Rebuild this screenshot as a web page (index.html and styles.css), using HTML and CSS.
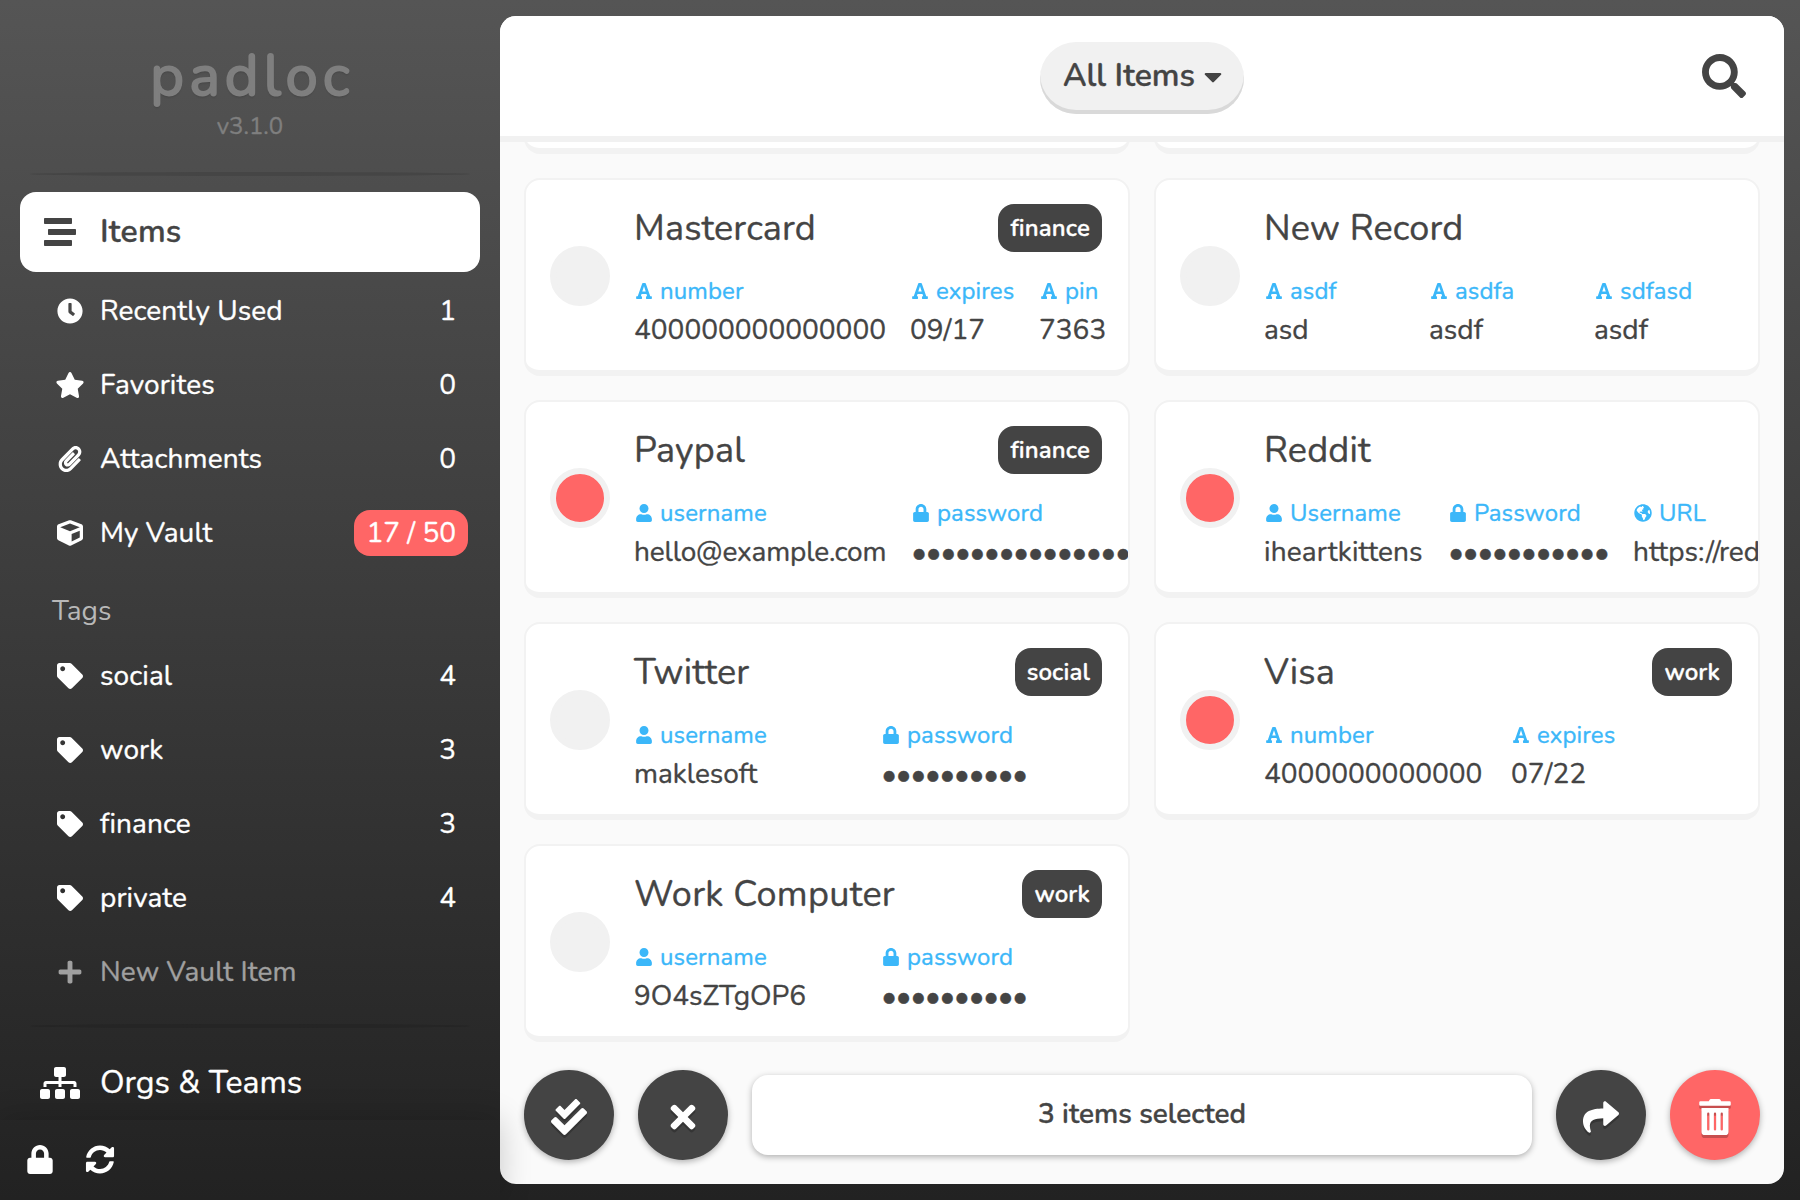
FILE: index.html
```html
<!DOCTYPE html>
<html lang="en">
<head>
<meta charset="utf-8">
<title>Padloc</title>
<link rel="stylesheet" href="styles.css">
</head>
<body>
<svg class="sprite" aria-hidden="true">
  <symbol id="stream" viewBox="0 0 512 512"><path d="M16 128h416c8.84 0 16-7.16 16-16V48c0-8.84-7.16-16-16-16H16C7.16 32 0 39.16 0 48v64c0 8.84 7.16 16 16 16zm480 80H80c-8.84 0-16 7.16-16 16v64c0 8.84 7.16 16 16 16h416c8.84 0 16-7.16 16-16v-64c0-8.84-7.16-16-16-16zm-64 176H16c-8.84 0-16 7.16-16 16v64c0 8.84 7.16 16 16 16h416c8.84 0 16-7.16 16-16v-64c0-8.84-7.16-16-16-16z"/></symbol>
  <symbol id="clock" viewBox="0 0 512 512"><path d="M256,8C119,8,8,119,8,256S119,504,256,504,504,393,504,256,393,8,256,8Zm92.49,313h0l-20,25a16,16,0,0,1-22.49,2.5h0l-67-49.72a40,40,0,0,1-15-31.23V112a16,16,0,0,1,16-16h32a16,16,0,0,1,16,16V256l58,42.5A16,16,0,0,1,348.49,321Z"/></symbol>
  <symbol id="star" viewBox="0 0 576 512"><path d="M259.3 17.8L194 150.2 47.9 171.5c-26.2 3.8-36.7 36.1-17.7 54.6l105.7 103-25 145.5c-4.5 26.3 23.2 46 46.4 33.7L288 439.6l130.7 68.7c23.2 12.2 50.9-7.4 46.4-33.7l-25-145.5 105.7-103c19-18.5 8.5-50.8-17.7-54.6L382 150.2 316.7 17.8c-11.7-23.6-45.6-23.9-57.4 0z"/></symbol>
  <symbol id="paperclip" viewBox="0 0 448 512"><path d="M43.246 466.142c-58.43-60.289-57.341-157.511 1.386-217.581L254.392 34c44.316-45.332 116.351-45.336 160.671 0 43.89 44.894 43.943 117.329 0 162.276L232.214 383.128c-29.855 30.537-78.633 30.111-107.982-.998-28.275-29.97-27.368-77.473 1.452-106.953l143.743-146.835c6.182-6.314 16.312-6.422 22.626-.241l22.861 22.379c6.315 6.182 6.422 16.312.241 22.626L171.427 319.927c-4.932 5.045-5.236 13.428-.648 18.292 4.372 4.634 11.245 4.711 15.688.165l182.849-186.851c19.613-20.062 19.613-52.725-.011-72.798-19.189-19.627-49.957-19.637-69.154 0L90.39 293.295c-34.763 35.56-35.299 93.12-1.191 128.313 34.01 35.093 88.985 35.137 123.058.286l172.06-175.999c6.177-6.319 16.307-6.433 22.626-.256l22.877 22.364c6.319 6.177 6.434 16.307.256 22.626l-172.06 175.998c-59.576 60.938-155.943 60.216-214.77-.485z"/></symbol>
  <symbol id="cube" viewBox="0 0 512 512"><path d="M239.1 6.3l-208 78c-18.7 7-31.1 25-31.1 45v225.1c0 18.2 10.3 34.8 26.5 42.9l208 104c13.5 6.8 29.4 6.8 42.9 0l208-104c16.3-8.1 26.5-24.8 26.5-42.9V129.3c0-20-12.4-37.9-31.1-44.9l-208-78C262 2.2 250 2.2 239.1 6.3zM256 68.4l192 72v1.1l-192 78-192-78v-1.1l192-72zm32 356V275.5l160-65v133.9l-160 80z"/></symbol>
  <symbol id="tag" viewBox="0 0 512 512"><path d="M0 252.118V48C0 21.49 21.49 0 48 0h204.118a48 48 0 0 1 33.941 14.059l211.882 211.882c18.745 18.745 18.745 49.137 0 67.882L293.823 497.941c-18.745 18.745-49.137 18.745-67.882 0L14.059 286.059A48 48 0 0 1 0 252.118zM112 64c-26.51 0-48 21.49-48 48s21.49 48 48 48 48-21.49 48-48-21.49-48-48-48z"/></symbol>
  <symbol id="plus" viewBox="0 0 448 512"><path d="M416 208H272V64c0-17.67-14.33-32-32-32h-32c-17.67 0-32 14.33-32 32v144H32c-17.67 0-32 14.33-32 32v32c0 17.67 14.33 32 32 32h144v144c0 17.67 14.33 32 32 32h32c17.67 0 32-14.33 32-32V304h144c17.67 0 32-14.33 32-32v-32c0-17.67-14.33-32-32-32z"/></symbol>
  <symbol id="sitemap" viewBox="0 0 640 512"><path d="M128 352H32c-17.67 0-32 14.33-32 32v96c0 17.67 14.33 32 32 32h96c17.67 0 32-14.33 32-32v-96c0-17.67-14.33-32-32-32zm-24-80h192v48h48v-48h192v48h48v-57.59c0-21.17-17.23-38.41-38.41-38.41H344v-64h40c17.67 0 32-14.33 32-32V32c0-17.67-14.33-32-32-32H256c-17.67 0-32 14.33-32 32v96c0 17.67 14.33 32 32 32h40v64H94.41C73.23 224 56 241.23 56 262.41V320h48v-48zm264 80h-96c-17.67 0-32 14.33-32 32v96c0 17.67 14.33 32 32 32h96c17.67 0 32-14.33 32-32v-96c0-17.67-14.33-32-32-32zm240 0h-96c-17.67 0-32 14.33-32 32v96c0 17.67 14.33 32 32 32h96c17.67 0 32-14.33 32-32v-96c0-17.67-14.33-32-32-32z"/></symbol>
  <symbol id="lock" viewBox="0 0 448 512"><path d="M400 224h-24v-72C376 68.2 307.8 0 224 0S72 68.2 72 152v72H48c-26.5 0-48 21.5-48 48v192c0 26.5 21.5 48 48 48h352c26.5 0 48-21.5 48-48V272c0-26.5-21.5-48-48-48zm-104 0H152v-72c0-39.7 32.3-72 72-72s72 32.3 72 72v72z"/></symbol>
  <symbol id="sync" viewBox="0 0 512 512"><path d="M370.72 133.28C339.458 104.008 298.888 87.962 255.848 88c-77.458.068-144.328 53.178-162.791 126.85-1.344 5.363-6.122 9.15-11.651 9.15H24.103c-7.498 0-13.194-6.807-11.807-14.176C33.933 94.924 134.813 8 256 8c66.448 0 126.791 26.136 171.315 68.685L463.03 40.97C478.149 25.851 504 36.559 504 57.941V192c0 13.255-10.745 24-24 24H345.941c-21.382 0-32.09-25.851-16.971-40.971l41.75-41.749zM32 296h134.059c21.382 0 32.09 25.851 16.971 40.971l-41.75 41.75c31.262 29.273 71.835 45.319 114.876 45.28 77.418-.07 144.315-53.144 162.787-126.849 1.344-5.363 6.122-9.15 11.651-9.15h57.304c7.498 0 13.194 6.807 11.807 14.176C478.067 417.076 377.187 504 256 504c-66.448 0-126.791-26.136-171.315-68.685L48.97 471.03C33.851 486.149 8 475.441 8 454.059V320c0-13.255 10.745-24 24-24z"/></symbol>
  <symbol id="caret" viewBox="0 0 320 512"><path d="M31.3 192h257.3c17.8 0 26.7 21.5 14.1 34.1L174.1 354.8c-7.8 7.8-20.5 7.8-28.3 0L17.2 226.1C4.6 213.5 13.7 192 31.3 192z"/></symbol>
  <symbol id="search" viewBox="0 0 512 512"><path d="M505 442.7L405.3 343c-4.5-4.5-10.6-7-17-7H372c27.6-35.3 44-79.7 44-128C416 93.1 322.9 0 208 0S0 93.1 0 208s93.1 208 208 208c48.3 0 92.7-16.4 128-44v16.3c0 6.4 2.5 12.5 7 17l99.7 99.7c9.4 9.4 24.6 9.4 33.9 0l28.3-28.3c9.4-9.4 9.4-24.6.1-34zM208 336c-70.7 0-128-57.2-128-128 0-70.7 57.2-128 128-128 70.7 0 128 57.2 128 128 0 70.7-57.2 128-128 128z"/></symbol>
  <symbol id="font" viewBox="0 0 448 512"><path d="M432 404h-30L275.5 43A24 24 0 0 0 252.8 26h-57.600a24 24 0 0 0-22.700 17L46 404H16a16 16 0 0 0-16 16v44a16 16 0 0 0 16 16h136a16 16 0 0 0 16-16v-44a16 16 0 0 0-16-16h-18l20-62h140l20 62h-18a16 16 0 0 0-16 16v44a16 16 0 0 0 16 16h136a16 16 0 0 0 16-16v-44a16 16 0 0 0-16-16zM174.400 268.300l42.700-124.600c3.100-9.800 5.700-23.700 6.900-31.300 1.200 7.600 3.800 21.500 6.900 31.300l42.700 124.600z"/></symbol>
  <symbol id="user" viewBox="0 0 448 512"><path d="M224 256c70.7 0 128-57.3 128-128S294.7 0 224 0 96 57.3 96 128s57.3 128 128 128zm89.6 32h-16.7c-22.2 10.2-46.9 16-72.9 16s-50.6-5.8-72.9-16h-16.7C60.2 288 0 348.2 0 422.4V464c0 26.5 21.5 48 48 48h352c26.5 0 48-21.5 48-48v-41.6c0-74.2-60.2-134.4-134.4-134.4z"/></symbol>
  <symbol id="globe" viewBox="0 0 496 512"><path d="M248 8C111.03 8 0 119.03 0 256s111.03 248 248 248 248-111.03 248-248S384.97 8 248 8zm82.29 357.6c-3.9 3.88-7.99 7.95-11.31 11.28-2.99 3-5.1 6.7-6.17 10.71-1.51 5.66-2.73 11.38-4.77 16.87l-17.39 46.85c-13.76 3-28 4.69-42.65 4.69v-27.38c1.69-12.62-7.64-36.26-22.63-51.25-6-6-9.37-14.14-9.37-22.63v-32.01c0-11.64-6.27-22.34-16.46-27.97-14.37-7.95-34.81-19.06-48.81-26.11-11.48-5.78-22.1-13.14-31.65-21.75l-.8-.72a114.792 114.792 0 0 1-18.06-20.74c-9.38-13.77-24.66-36.42-34.59-51.14 20.47-45.5 57.36-82.04 103.2-101.89l24.01 12.01C203.48 89.74 216 82.01 216 70.11v-11.3c7.99-1.29 16.12-2.11 24.39-2.42l28.3 28.3c6.25 6.25 6.25 16.38 0 22.63L264 112l-10.34 10.34c-3.12 3.12-3.12 8.19 0 11.31l4.69 4.69c3.12 3.12 3.12 8.19 0 11.31l-8 8a8.008 8.008 0 0 1-5.66 2.34h-8.99c-2.08 0-4.08.81-5.58 2.27l-9.92 9.65a8.008 8.008 0 0 0-1.58 9.31l15.59 31.19c2.66 5.32-1.21 11.58-7.15 11.58h-5.64c-1.93 0-3.79-.7-5.24-1.96l-9.28-8.06a16.017 16.017 0 0 0-15.55-3.1l-31.17 10.39a11.95 11.95 0 0 0-8.17 11.34c0 4.53 2.56 8.66 6.61 10.69l11.08 5.54c9.41 4.71 19.79 7.16 30.31 7.16s22.59 27.29 32 32h66.75c8.49 0 16.62 3.37 22.63 9.37l13.69 13.69a30.503 30.503 0 0 1 8.93 21.57 46.536 46.536 0 0 1-13.72 32.98zM417 274.25c-5.79-1.45-10.84-5-14.15-9.97l-17.98-26.97a23.97 23.97 0 0 1 0-26.62l19.59-29.38c2.32-3.47 5.5-6.29 9.24-8.15l12.98-6.49C440.2 193.59 448 223.87 448 256c0 8.67-.74 17.16-1.82 25.54L417 274.25z"/></symbol>
  <symbol id="checks" viewBox="0 0 512 512"><path d="M505 174.8l-39.6-39.6c-9.4-9.4-24.6-9.4-33.9 0L192 374.7 80.6 263.2c-9.4-9.4-24.6-9.4-33.9 0L7 302.9c-9.4 9.4-9.4 24.6 0 34L175 505c9.4 9.4 24.6 9.4 33.9 0l296-296.2c9.4-9.5 9.4-24.7.1-34zm-324.3 106c6.2 6.3 16.4 6.3 22.6 0l208-208.2c6.2-6.3 6.2-16.4 0-22.6L366.1 4.7c-6.2-6.3-16.4-6.3-22.6 0L192 156.2l-55.4-55.5c-6.2-6.3-16.4-6.3-22.6 0L68.7 146c-6.2 6.3-6.2 16.4 0 22.6l112 112.2z"/></symbol>
  <symbol id="times" viewBox="0 0 352 512"><path d="M242.72 256l100.07-100.07c12.28-12.28 12.28-32.19 0-44.48l-22.24-22.24c-12.28-12.28-32.19-12.28-44.48 0L176 189.28 75.93 89.21c-12.28-12.28-32.19-12.28-44.48 0L9.21 111.45c-12.28 12.28-12.28 32.19 0 44.48L109.28 256 9.21 356.07c-12.28 12.28-12.28 32.19 0 44.48l22.24 22.24c12.28 12.28 32.2 12.28 44.48 0L176 322.72l100.07 100.07c12.28 12.28 32.2 12.28 44.48 0l22.24-22.24c12.28-12.28 12.28-32.19 0-44.48L242.72 256z"/></symbol>
  <symbol id="share" viewBox="0 0 512 512"><path d="M503.691 189.836L327.687 37.851C312.281 24.546 288 35.347 288 56.015v80.053C127.371 137.907 0 170.1 0 322.326c0 61.441 39.581 122.309 83.333 154.132 13.653 9.931 33.111-2.533 28.077-18.631C66.066 312.814 132.917 274.316 288 272.085V360c0 20.7 24.3 31.453 39.687 18.164l176.004-152c11.071-9.562 11.086-26.753 0-36.328z"/></symbol>
  <symbol id="trash" viewBox="0 0 448 512"><path d="M32 464a48 48 0 0 0 48 48h288a48 48 0 0 0 48-48V128H32zm272-256a16 16 0 0 1 32 0v224a16 16 0 0 1-32 0zm-96 0a16 16 0 0 1 32 0v224a16 16 0 0 1-32 0zm-96 0a16 16 0 0 1 32 0v224a16 16 0 0 1-32 0zM432 32H312l-9.4-18.7A24 24 0 0 0 281.1 0H166.8a23.72 23.72 0 0 0-21.4 13.3L136 32H16A16 16 0 0 0 0 48v32a16 16 0 0 0 16 16h416a16 16 0 0 0 16-16V48a16 16 0 0 0-16-16z"/></symbol>
</svg>

<div class="app">
  <aside class="sidebar">
    <div class="brand">
      <div class="logo">padloc</div>
      <div class="version">v3.1.0</div>
    </div>
    <div class="divider"></div>
    <nav class="menu">
      <a class="entry selected"><svg class="icon"><use href="#stream"/></svg><span>Items</span></a>
      <div class="sub">
        <a class="row"><svg class="icon"><use href="#clock"/></svg><span class="name">Recently Used</span><span class="count">1</span></a>
        <a class="row"><svg class="icon"><use href="#star"/></svg><span class="name">Favorites</span><span class="count">0</span></a>
        <a class="row"><svg class="icon"><use href="#paperclip"/></svg><span class="name">Attachments</span><span class="count">0</span></a>
        <a class="row"><svg class="icon"><use href="#cube"/></svg><span class="name">My Vault</span><span class="quota">17 / 50</span></a>
        <h2 class="heading">Tags</h2>
        <a class="row"><svg class="icon"><use href="#tag"/></svg><span class="name">social</span><span class="count">4</span></a>
        <a class="row"><svg class="icon"><use href="#tag"/></svg><span class="name">work</span><span class="count">3</span></a>
        <a class="row"><svg class="icon"><use href="#tag"/></svg><span class="name">finance</span><span class="count">3</span></a>
        <a class="row"><svg class="icon"><use href="#tag"/></svg><span class="name">private</span><span class="count">4</span></a>
        <a class="row muted"><svg class="icon"><use href="#plus"/></svg><span class="name">New Vault Item</span></a>
      </div>
      <div class="divider faint"></div>
      <a class="entry orgs"><svg class="icon"><use href="#sitemap"/></svg><span>Orgs &amp; Teams</span></a>
    </nav>
    <footer class="tools">
      <svg class="icon"><use href="#lock"/></svg>
      <svg class="icon"><use href="#sync"/></svg>
    </footer>
  </aside>

  <main class="panel">
    <header class="header">
      <button class="filter"><span>All Items</span><svg class="caret"><use href="#caret"/></svg></button>
      <svg class="search"><use href="#search"/></svg>
    </header>
    <section class="list">
      <article class="card"></article>
      <article class="card"></article>

      <article class="card">
        <div class="check"></div>
        <div class="body">
          <div class="top"><h3>Mastercard</h3><span class="chip">finance</span></div>
          <div class="fields f3-card">
            <div class="field"><div class="label"><svg><use href="#font"/></svg>number</div><div class="value">400000000000000</div></div>
            <div class="field"><div class="label"><svg><use href="#font"/></svg>expires</div><div class="value">09/17</div></div>
            <div class="field"><div class="label"><svg><use href="#font"/></svg>pin</div><div class="value">7363</div></div>
          </div>
        </div>
      </article>

      <article class="card">
        <div class="check"></div>
        <div class="body">
          <div class="top"><h3>New Record</h3></div>
          <div class="fields f3">
            <div class="field"><div class="label"><svg><use href="#font"/></svg>asdf</div><div class="value">asd</div></div>
            <div class="field"><div class="label"><svg><use href="#font"/></svg>asdfa</div><div class="value">asdf</div></div>
            <div class="field"><div class="label"><svg><use href="#font"/></svg>sdfasd</div><div class="value">asdf</div></div>
          </div>
        </div>
      </article>

      <article class="card">
        <div class="check on"></div>
        <div class="body">
          <div class="top"><h3>Paypal</h3><span class="chip">finance</span></div>
          <div class="fields f2-wide">
            <div class="field"><div class="label"><svg><use href="#user"/></svg>username</div><div class="value v-mail">hello@example.com</div></div>
            <div class="field"><div class="label"><svg><use href="#lock"/></svg>password</div><div class="value dots">●●●●●●●●●●●●●●●</div></div>
          </div>
        </div>
      </article>

      <article class="card">
        <div class="check on"></div>
        <div class="body">
          <div class="top"><h3>Reddit</h3></div>
          <div class="fields f3-login">
            <div class="field"><div class="label"><svg><use href="#user"/></svg>Username</div><div class="value v-kit">iheartkittens</div></div>
            <div class="field"><div class="label"><svg><use href="#lock"/></svg>Password</div><div class="value dots">●●●●●●●●●●●</div></div>
            <div class="field"><div class="label"><svg><use href="#globe"/></svg>URL</div><div class="value">https://reddit.com</div></div>
          </div>
        </div>
      </article>

      <article class="card">
        <div class="check"></div>
        <div class="body">
          <div class="top"><h3>Twitter</h3><span class="chip">social</span></div>
          <div class="fields f2">
            <div class="field"><div class="label"><svg><use href="#user"/></svg>username</div><div class="value">maklesoft</div></div>
            <div class="field"><div class="label"><svg><use href="#lock"/></svg>password</div><div class="value dots">●●●●●●●●●●</div></div>
          </div>
        </div>
      </article>

      <article class="card">
        <div class="check on"></div>
        <div class="body">
          <div class="top"><h3>Visa</h3><span class="chip">work</span></div>
          <div class="fields f2">
            <div class="field"><div class="label"><svg><use href="#font"/></svg>number</div><div class="value">4000000000000</div></div>
            <div class="field"><div class="label"><svg><use href="#font"/></svg>expires</div><div class="value">07/22</div></div>
          </div>
        </div>
      </article>

      <article class="card">
        <div class="check"></div>
        <div class="body">
          <div class="top"><h3 class="h-long">Work Computer</h3><span class="chip">work</span></div>
          <div class="fields f2">
            <div class="field"><div class="label"><svg><use href="#user"/></svg>username</div><div class="value">9O4sZTgOP6</div></div>
            <div class="field"><div class="label"><svg><use href="#lock"/></svg>password</div><div class="value dots">●●●●●●●●●●</div></div>
          </div>
        </div>
      </article>
    </section>

    <div class="actions">
      <button class="fab"><svg><use href="#checks"/></svg></button>
      <button class="fab"><svg><use href="#times"/></svg></button>
      <div class="summary">3 items selected</div>
      <button class="fab"><svg><use href="#share"/></svg></button>
      <button class="fab danger"><svg><use href="#trash"/></svg></button>
    </div>
  </main>
</div>
</body>
</html>
```
FILE: styles.css
```css
* { box-sizing: border-box; margin: 0; }

body {
  width: 1800px;
  height: 1200px;
  overflow: hidden;
  font-family: Nunito, Lato, "Open Sans", sans-serif;
  font-size: 28px;
  font-weight: 400;
  line-height: 36px;
  color: #444;
  background: linear-gradient(180deg, #555, #222);
  -webkit-text-stroke: .35px currentColor;
}

button { border: 0; padding: 0; font: inherit; color: inherit; }
svg { fill: currentColor; flex: none; }
.sprite { display: none; }

.app { display: flex; height: 1200px; }

/* Sidebar */
.sidebar {
  width: 500px;
  display: flex;
  flex-direction: column;
  color: #fff;
  position: relative;
  z-index: 1;
}
.brand {
  height: 172px;
  flex: none;
  padding-top: 43px;
  text-align: center;
  color: #7f7f7f;
}
.logo {
  height: 65px;
  font-size: 58px;
  font-weight: 400;
  line-height: 66px;
  letter-spacing: 5px;
  text-indent: 5px;
  -webkit-text-stroke: 2px #7f7f7f;
  text-shadow: 0 2px 2px rgba(0, 0, 0, .15);
}
.version { font-size: 24px; line-height: 36px; }
.divider {
  flex: none;
  height: 4px;
  margin: 0 30px;
  border-radius: 50%;
  background: #454545;
}
.divider.faint { background: #252525; }
.menu { flex: 1; padding: 16px 20px 0; }
.entry {
  display: flex;
  align-items: center;
  height: 80px;
  border-radius: 16px;
  font-size: 32px;
}
.entry .icon { width: 40px; height: 32px; margin: 0 20px; }
.entry.selected { background: #fff; color: #444; font-weight: 600; letter-spacing: .2px; }
.sub { padding: 2px 0 15px; }
.row { display: flex; align-items: center; height: 74px; padding: 0 24px 0 35px; }
.row .icon { width: 30px; height: 26px; margin-right: 15px; }
.name { flex: 1; letter-spacing: .1px; }
.muted { color: #a0a0a0; }
.quota {
  height: 46px;
  padding: 0 12px;
  margin-right: -12px;
  border-radius: 16px;
  line-height: 46px;
  background: #f66;
}
.heading {
  height: 69px;
  padding-left: 32px;
  font-size: 28px;
  font-weight: 400;
  line-height: 83px;
  color: #b8b8b8;
  -webkit-text-stroke: 0;
}
.menu .divider { margin: 0 10px; }
.orgs { height: 76px; margin-top: 15px; padding-top: 4px; }
.tools {
  height: 80px;
  flex: none;
  display: flex;
  align-items: center;
  gap: 30px;
  padding: 0 0 2px 25px;
  box-shadow: 0 0 32px rgba(0, 0, 0, .2);
}
.tools .icon { width: 30px; height: 29px; }

/* Main panel */
.panel {
  width: 1284px;
  height: 1168px;
  margin-top: 16px;
  display: flex;
  flex-direction: column;
  overflow: hidden;
  border-radius: 16px;
  background: #fafafa;
}
.header {
  height: 126px;
  flex: none;
  display: grid;
  grid-template-columns: 1fr auto 1fr;
  align-items: center;
  padding: 0 38px;
  background: #fff;
  border-bottom: 6px solid #f1f1f1;
}
.filter {
  grid-column: 2;
  display: flex;
  align-items: center;
  width: 204px;
  height: 72px;
  padding: 0 22px 4px 23px;
  margin-top: 4px;
  border-radius: 36px;
  background: #f1f1f1;
  box-shadow: inset 0 -4px #d9d9d9;
  font-size: 32px;
  font-weight: 600;
}
.filter span { flex: 1; text-align: left; }
.caret { width: 18px; height: 29px; }
.search { justify-self: end; width: 44px; height: 44px; }

.list {
  flex: 1;
  min-height: 0;
  overflow: hidden;
  display: grid;
  grid-template-columns: 606px 606px;
  grid-template-rows: 12px;
  grid-auto-rows: 198px;
  gap: 24px;
  padding: 0 24px;
  align-content: start;
}
.card {
  display: flex;
  align-items: center;
  align-self: end;
  height: 198px;
  padding-left: 24px;
  border: 2px solid #f2f2f2;
  border-bottom-width: 6px;
  border-radius: 16px;
  background: #fff;
  overflow: hidden;
}
.check {
  flex: none;
  width: 60px;
  height: 60px;
  margin: 2px 24px 0 0;
  border: 6px solid #f1f1f1;
  border-radius: 50%;
  background: #f1f1f1;
}
.check.on { background: #f66; }
.body { flex: 1; min-width: 0; height: 190px; padding-top: 24px; }
.top { display: flex; justify-content: space-between; height: 48px; padding-right: 26px; }
h3 { font-size: 36px; font-weight: 400; line-height: 50px; letter-spacing: .15px; }
.h-long { letter-spacing: .3px; }
.chip {
  height: 48px;
  padding: 0 12px;
  border-radius: 16px;
  background: #444;
  color: #fff;
  font-size: 24px;
  font-weight: 600;
  line-height: 48px;
  letter-spacing: .15px;
}
.fields { display: grid; margin-top: 21px; }
.f2 { grid-template-columns: 247px 247px; }
.f3 { grid-template-columns: 165px 165px 165px; }
.f2-wide { grid-template-columns: 277px 247px; }
.f3-card { grid-template-columns: 276px 129px 90px; }
.f3-login { grid-template-columns: 184px 185px 184px; }
.field { white-space: nowrap; }
.label {
  display: flex;
  align-items: center;
  height: 36px;
  font-size: 24px;
  color: #3bb7f9;
  letter-spacing: .1px;
}
.label svg { width: 18px; height: 18px; margin: 0 7px 0 1px; }
.value { height: 40px; line-height: 43px; }
.v-mail { letter-spacing: -.15px; }
.v-kit { letter-spacing: .15px; }
.dots {
  padding-left: 2px;
  font-family: "DejaVu Sans", sans-serif;
  font-size: 14px;
  letter-spacing: 2.35px;
  line-height: 44px;
}

/* Selection bar */
.actions {
  flex: none;
  height: 138px;
  display: flex;
  align-items: center;
  gap: 24px;
  padding: 0 24px;
}
.fab {
  display: grid;
  place-items: center;
  width: 90px;
  height: 90px;
  padding-top: 3px;
  border-radius: 50%;
  background: #444;
  color: #fff;
  box-shadow: 0 2px 6px rgba(0, 0, 0, .3);
}
.fab svg { width: 36px; height: 36px; filter: drop-shadow(0 3px 0 rgba(0, 0, 0, .22)); }
.fab.danger { background: #f66; }
.summary {
  flex: 1;
  height: 80px;
  border-radius: 16px;
  background: #fff;
  box-shadow: 0 2px 6px rgba(0, 0, 0, .3);
  text-align: center;
  font-weight: 600;
  line-height: 78px;
}
```
